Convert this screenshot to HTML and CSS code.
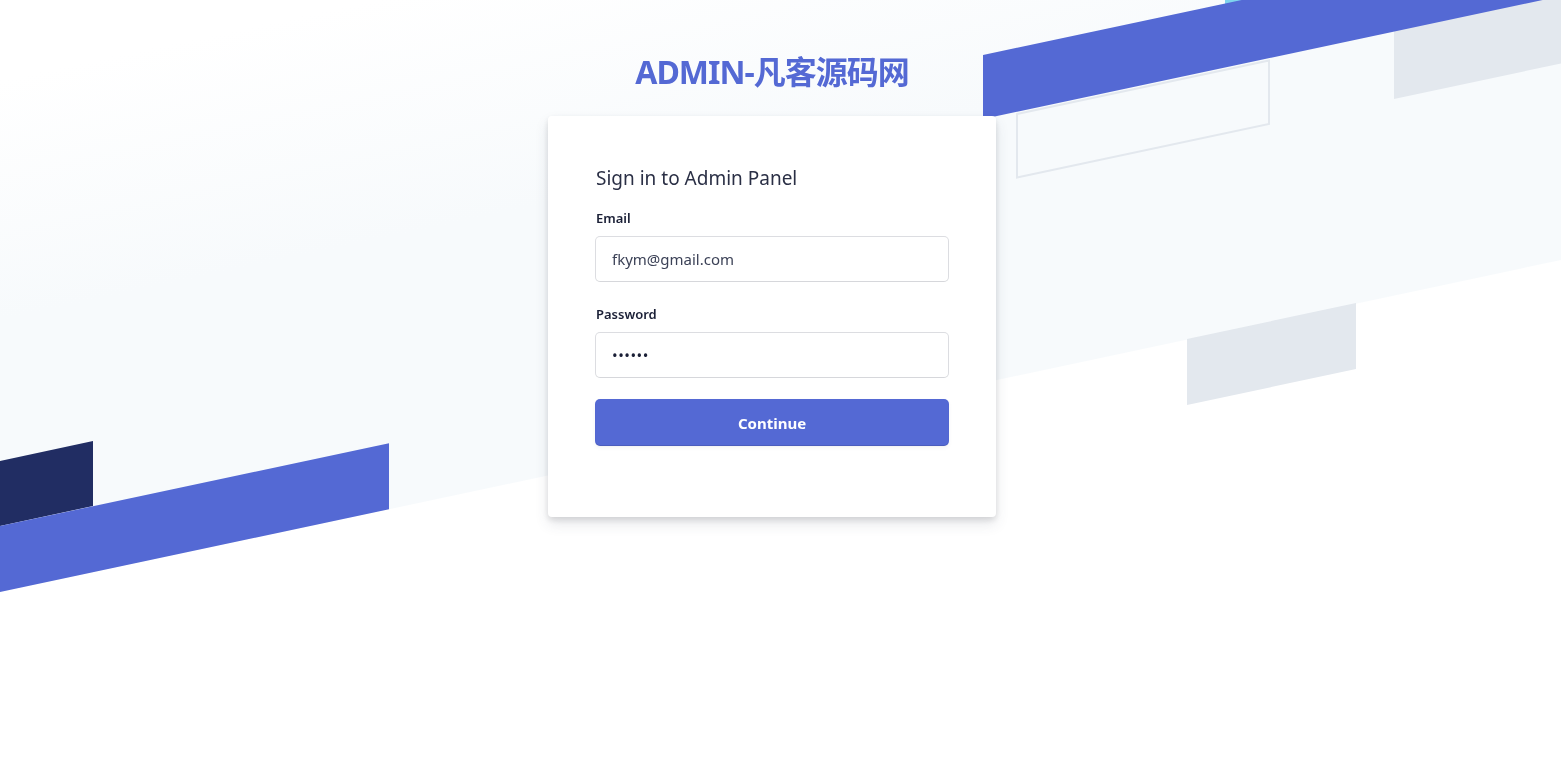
FILE: index.html
```html
<!DOCTYPE html>
<html lang="zh-CN">
<head>
    <meta charset="UTF-8">
    <meta name="viewport" content="width=device-width, initial-scale=1.0">
    <title>ADMIN - Sign in</title>
    <link rel="stylesheet" href="styles.css">
</head>
<body>
    <!-- skewed stripes behind the form -->
    <div class="login-bg" aria-hidden="true">
        <svg class="login-bg-art" viewBox="0 0 1561 761" preserveAspectRatio="none">
            <defs>
                <linearGradient id="fade" gradientUnits="userSpaceOnUse" x1="0" y1="80" x2="49" y2="310">
                    <stop offset="0" stop-color="#ffffff"/>
                    <stop offset="1" stop-color="#f7fafc"/>
                </linearGradient>
            </defs>
            <polygon points="0,0 1561,0 1561,260 0,592" fill="url(#fade)"/>
            <polygon points="1017,114 1269,60.4 1269,124 1017,177.6" fill="none" stroke="#e3e8ee" stroke-width="2"/>
            <polygon points="1225,-100 1561,-100 1561,0 1225,10" fill="#7fd3ed"/>
            <polygon points="1394,20 1561,-15 1561,63.5 1394,99" fill="#e3e8ee"/>
            <polygon points="983,55 1561,-67.9 1561,-3.9 983,119" fill="#5469d4"/>
            <polygon points="1187,339 1356,303 1356,369 1187,405" fill="#e3e8ee"/>
            <polygon points="0,461 93,441 93,506 0,526" fill="#212d63"/>
            <polygon points="0,526 389,443.3 389,509.3 0,592" fill="#5469d4"/>
        </svg>
    </div>

    <main class="login-page">
        <h1 class="brand">ADMIN-凡客源码网</h1>

        <div class="form-card">
            <form class="form-inner" onsubmit="return false">
                <span class="form-title">Sign in to Admin Panel</span>

                <div class="field">
                    <label for="email">Email</label>
                    <input type="email" id="email" name="email" value="fkym@gmail.com">
                </div>

                <div class="field">
                    <label for="password">Password</label>
                    <input type="password" id="password" name="password" value="123456">
                </div>

                <div class="field">
                    <input type="submit" name="submit" value="Continue">
                </div>
            </form>
        </div>
    </main>
</body>
</html>
```

FILE: styles.css
```css
:root {
    --brand-color: #5469d4;
    --text-color: #1a1f36;
    --input-text: #3c4257;
    --card-bg: #ffffff;
}

* {
    box-sizing: border-box;
}

body {
    margin: 0;
    padding: 0;
    min-height: 100vh;
    background-color: #ffffff;
    font-family: 'Noto Sans', 'Noto Sans CJK SC', sans-serif;
    color: var(--text-color);
}

.login-bg {
    position: fixed;
    top: 0;
    left: 0;
    right: 0;
    bottom: 0;
    z-index: -1;
    overflow: hidden;
}

.login-bg-art {
    display: block;
    width: 100%;
    height: 100%;
}

.login-page {
    display: flex;
    flex-direction: column;
    align-items: center;
    padding: 48px 17px 24px 0;
}

.brand {
    margin: 0 0 20px;
    font-size: 32px;
    line-height: 48px;
    font-weight: 700;
    letter-spacing: -1px;
    color: var(--brand-color);
}

.form-card {
    width: 448px;
    background: var(--card-bg);
    border-radius: 4px;
    box-shadow: rgba(60, 66, 87, 0.12) 0 7px 14px 0, rgba(0, 0, 0, 0.12) 0 3px 6px 0;
}

.form-inner {
    padding: 48px 48px 49px;
}

.form-title {
    display: block;
    font-size: 19px;
    line-height: 28px;
    padding-bottom: 16px;
    color: #2a2f45;
}

.field {
    padding-bottom: 23px;
}

.field label {
    display: block;
    font-size: 13px;
    font-weight: 600;
    line-height: 20px;
    margin-bottom: 9px;
    color: var(--text-color);
}

.field input {
    display: block;
    width: 100%;
    height: 44px;
    padding: 8px 16px;
    font-family: inherit;
    font-size: 15px;
    line-height: 28px;
    color: var(--input-text);
    background-color: #ffffff;
    border: none;
    border-radius: 4px;
    outline-color: rgba(84, 105, 212, 0.5);
    box-shadow: rgba(60, 66, 87, 0.18) 0 0 0 1px, rgba(0, 0, 0, 0.03) 0 1px 1px 0;
}

.field input[type="password"] {
    color: var(--text-color);
    letter-spacing: 0.5px;
}

.field input[type="submit"] {
    height: 45px;
    padding: 0 16px;
    background-color: var(--brand-color);
    color: #ffffff;
    font-weight: 700;
    cursor: pointer;
    box-shadow: rgba(0, 0, 0, 0.12) 0 1px 1px 0, var(--brand-color) 0 0 0 1px, rgba(60, 66, 87, 0.08) 0 2px 5px 0;
}
```
